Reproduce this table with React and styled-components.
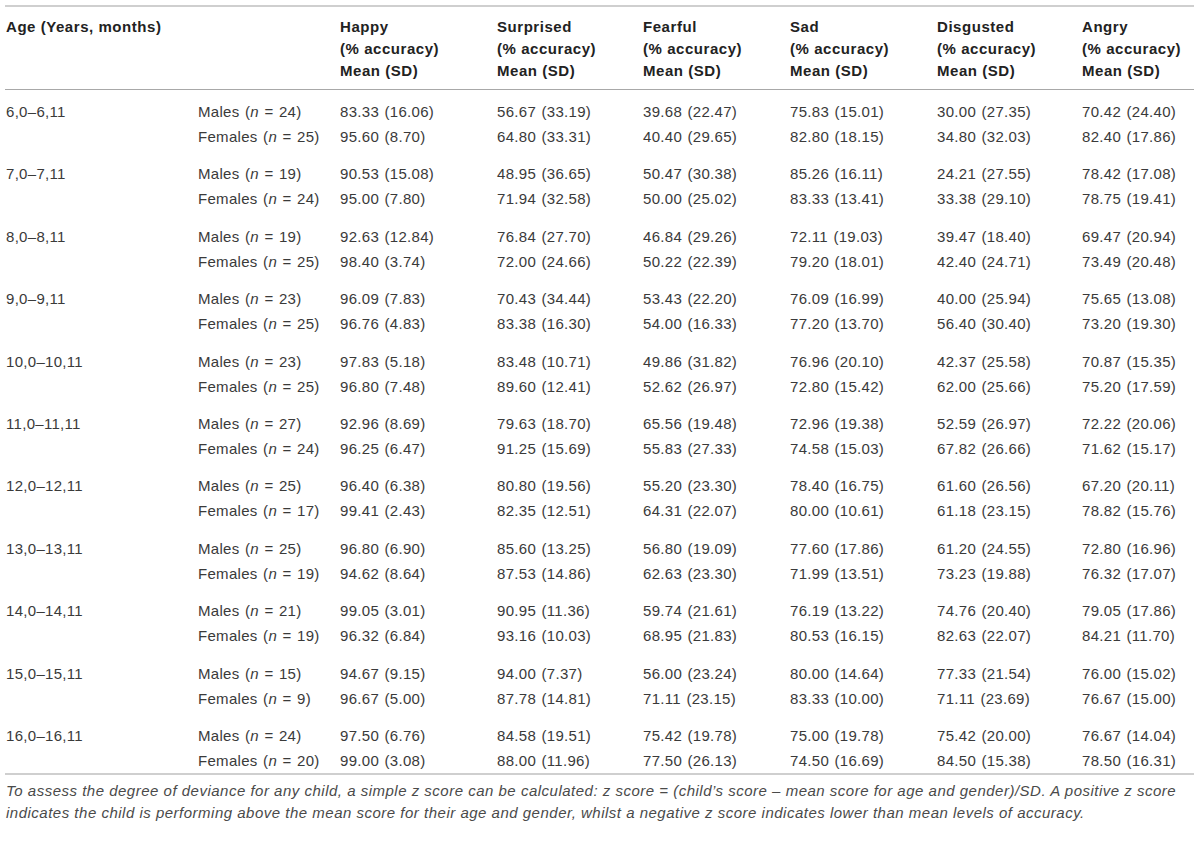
import React from 'react';
import styled, { createGlobalStyle } from 'styled-components';

const GlobalStyle = createGlobalStyle`
  html, body {
    margin: 0;
    padding: 0;
    background: #fff;
  }
  body {
    font-family: "Liberation Sans", Arial, sans-serif;
    color: #333;
  }
`;

const Page = styled.div`
  width: 1200px;
  padding: 5px 6px 0 5px;
  box-sizing: border-box;
`;

const Table = styled.table`
  width: 100%;
  border-collapse: collapse;
  border-top: 2px solid #cfcfcf;
  border-bottom: 2px solid #cfcfcf;
  font-size: 15px;
  table-layout: fixed;
`;

const Head = styled.th`
  text-align: left;
  vertical-align: top;
  font-weight: bold;
  color: #222;
  line-height: 22px;
  letter-spacing: 0.55px;
  padding: 9px 0 7px 1px;
  border-bottom: 1px solid #a8a8a8;
`;

const Cell = styled.td`
  padding: ${p => p.$top || 0}px 0 ${p => p.$bottom || 0}px 1px;
  vertical-align: top;
  line-height: 25px;
  color: #3a3a3a;
  white-space: nowrap;
  letter-spacing: 0.3px;
  word-spacing: 1px;
`;

const Note = styled.p`
  margin: 5px 0 0 1px;
  font-style: italic;
  font-size: 15px;
  line-height: 22px;
  color: #4a4a4a;
  letter-spacing: 0.5px;
`;

const columns = ['Happy', 'Surprised', 'Fearful', 'Sad', 'Disgusted', 'Angry'];
const widths = [192, 142, 157, 146, 147, 147, 145, 113];

const data = [
  ['6,0–6,11', 24, 25,
    ['83.33 (16.06)', '56.67 (33.19)', '39.68 (22.47)', '75.83 (15.01)', '30.00 (27.35)', '70.42 (24.40)'],
    ['95.60 (8.70)', '64.80 (33.31)', '40.40 (29.65)', '82.80 (18.15)', '34.80 (32.03)', '82.40 (17.86)']],
  ['7,0–7,11', 19, 24,
    ['90.53 (15.08)', '48.95 (36.65)', '50.47 (30.38)', '85.26 (16.11)', '24.21 (27.55)', '78.42 (17.08)'],
    ['95.00 (7.80)', '71.94 (32.58)', '50.00 (25.02)', '83.33 (13.41)', '33.38 (29.10)', '78.75 (19.41)']],
  ['8,0–8,11', 19, 25,
    ['92.63 (12.84)', '76.84 (27.70)', '46.84 (29.26)', '72.11 (19.03)', '39.47 (18.40)', '69.47 (20.94)'],
    ['98.40 (3.74)', '72.00 (24.66)', '50.22 (22.39)', '79.20 (18.01)', '42.40 (24.71)', '73.49 (20.48)']],
  ['9,0–9,11', 23, 25,
    ['96.09 (7.83)', '70.43 (34.44)', '53.43 (22.20)', '76.09 (16.99)', '40.00 (25.94)', '75.65 (13.08)'],
    ['96.76 (4.83)', '83.38 (16.30)', '54.00 (16.33)', '77.20 (13.70)', '56.40 (30.40)', '73.20 (19.30)']],
  ['10,0–10,11', 23, 25,
    ['97.83 (5.18)', '83.48 (10.71)', '49.86 (31.82)', '76.96 (20.10)', '42.37 (25.58)', '70.87 (15.35)'],
    ['96.80 (7.48)', '89.60 (12.41)', '52.62 (26.97)', '72.80 (15.42)', '62.00 (25.66)', '75.20 (17.59)']],
  ['11,0–11,11', 27, 24,
    ['92.96 (8.69)', '79.63 (18.70)', '65.56 (19.48)', '72.96 (19.38)', '52.59 (26.97)', '72.22 (20.06)'],
    ['96.25 (6.47)', '91.25 (15.69)', '55.83 (27.33)', '74.58 (15.03)', '67.82 (26.66)', '71.62 (15.17)']],
  ['12,0–12,11', 25, 17,
    ['96.40 (6.38)', '80.80 (19.56)', '55.20 (23.30)', '78.40 (16.75)', '61.60 (26.56)', '67.20 (20.11)'],
    ['99.41 (2.43)', '82.35 (12.51)', '64.31 (22.07)', '80.00 (10.61)', '61.18 (23.15)', '78.82 (15.76)']],
  ['13,0–13,11', 25, 19,
    ['96.80 (6.90)', '85.60 (13.25)', '56.80 (19.09)', '77.60 (17.86)', '61.20 (24.55)', '72.80 (16.96)'],
    ['94.62 (8.64)', '87.53 (14.86)', '62.63 (23.30)', '71.99 (13.51)', '73.23 (19.88)', '76.32 (17.07)']],
  ['14,0–14,11', 21, 19,
    ['99.05 (3.01)', '90.95 (11.36)', '59.74 (21.61)', '76.19 (13.22)', '74.76 (20.40)', '79.05 (17.86)'],
    ['96.32 (6.84)', '93.16 (10.03)', '68.95 (21.83)', '80.53 (16.15)', '82.63 (22.07)', '84.21 (11.70)']],
  ['15,0–15,11', 15, 9,
    ['94.67 (9.15)', '94.00 (7.37)', '56.00 (23.24)', '80.00 (14.64)', '77.33 (21.54)', '76.00 (15.02)'],
    ['96.67 (5.00)', '87.78 (14.81)', '71.11 (23.15)', '83.33 (10.00)', '71.11 (23.69)', '76.67 (15.00)']],
  ['16,0–16,11', 24, 20,
    ['97.50 (6.76)', '84.58 (19.51)', '75.42 (19.78)', '75.00 (19.78)', '75.42 (20.00)', '76.67 (14.04)'],
    ['99.00 (3.08)', '88.00 (11.96)', '77.50 (26.13)', '74.50 (16.69)', '84.50 (15.38)', '78.50 (16.31)']],
];

const Group = ({ age, males, females, mRow, fRow, first, last }) => {
  const top = first ? 9 : 6.4;
  const bottom = last ? 0 : 6;
  return (
    <>
      <tr>
        <Cell $top={top}>{age}</Cell>
        <Cell $top={top}>Males (<i>n</i> = {males})</Cell>
        {mRow.map((v, i) => (
          <Cell key={i} $top={top}>{v}</Cell>
        ))}
      </tr>
      <tr>
        <Cell $bottom={bottom} />
        <Cell $bottom={bottom}>Females (<i>n</i> = {females})</Cell>
        {fRow.map((v, i) => (
          <Cell key={i} $bottom={bottom}>{v}</Cell>
        ))}
      </tr>
    </>
  );
};

export default function App() {
  return (
    <Page>
      <GlobalStyle />
      <Table>
        <colgroup>
          {widths.map((w, i) => <col key={i} style={{ width: w }} />)}
        </colgroup>
        <thead>
          <tr>
            <Head>Age (Years, months)</Head>
            <Head />
            {columns.map(c => (
              <Head key={c}>
                {c}<br />(% accuracy)<br />Mean (SD)
              </Head>
            ))}
          </tr>
        </thead>
        <tbody>
          {data.map(([age, m, f, mRow, fRow], i) => (
            <Group
              key={age}
              age={age}
              males={m}
              females={f}
              mRow={mRow}
              fRow={fRow}
              first={i === 0}
              last={i === data.length - 1}
            />
          ))}
        </tbody>
      </Table>
      <Note>
        To assess the degree of deviance for any child, a simple z score can be calculated: z score = (child’s score – mean score for age and gender)/SD. A positive z score indicates the child is performing above the mean score for their age and gender, whilst a negative z score indicates lower than mean levels of accuracy.
      </Note>
    </Page>
  );
}
